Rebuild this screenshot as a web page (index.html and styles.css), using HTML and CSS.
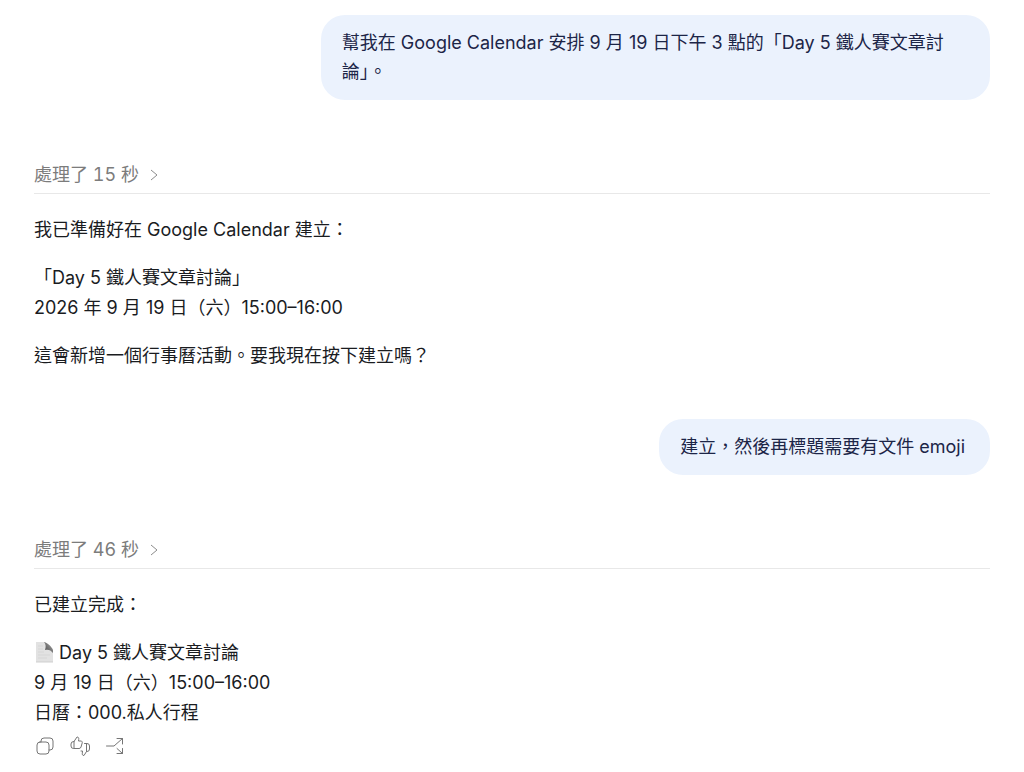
FILE: index.html
```html
<!DOCTYPE html>
<html lang="zh-Hant">
<head>
    <meta charset="UTF-8">
    <meta name="viewport" content="width=device-width, initial-scale=1.0">
    <title>Google Calendar 行程安排</title>
    <link rel="stylesheet" href="styles.css">
</head>
<body>
    <main class="chat">
        <div class="user-message">幫我在 Google Calendar 安排 9 月 19 日下午 3 點的「Day 5 鐵人賽文章討論」。</div>

        <section class="reply">
            <button type="button" class="reply-status">
                處理了 15 秒
                <svg class="chevron" viewBox="0 0 8 12" aria-hidden="true"><path d="M1 1l6 5-6 5"/></svg>
            </button>
            <div class="reply-body">
                <p>我已準備好在 Google Calendar 建立：</p>
                <p>「Day 5 鐵人賽文章討論」<br>2026 年 9 月 19 日（六）15:00–16:00</p>
                <p>這會新增一個行事曆活動。要我現在按下建立嗎？</p>
            </div>
        </section>

        <div class="user-message">建立，然後再標題需要有文件 emoji</div>

        <section class="reply">
            <button type="button" class="reply-status">
                處理了 46 秒
                <svg class="chevron" viewBox="0 0 8 12" aria-hidden="true"><path d="M1 1l6 5-6 5"/></svg>
            </button>
            <div class="reply-body">
                <p>已建立完成：</p>
                <p>
                    <!-- 文件圖示 -->
                    <svg class="doc-icon" viewBox="0 0 20 22" role="img" aria-label="文件">
                        <defs>
                            <linearGradient id="curl" x1="0" y1="1" x2="1" y2="0">
                                <stop offset="0" stop-color="#444"/>
                                <stop offset="1" stop-color="#aaa"/>
                            </linearGradient>
                        </defs>
                        <path d="M2 1h9l8 9v11H2z" fill="#e2e2e2"/>
                        <path d="M10 1c2 2 2 5 1 8 3-1 6 0 8 3V9c-1-3-5-7-9-8z" fill="url(#curl)"/>
                        <path d="M4 5h5M4 8h5M4 11h6M4 14h12M4 17h9" stroke="#d6d6d6" fill="none"/>
                        <path d="M2 21h17" stroke="#cfcfcf"/>
                    </svg>
                    Day 5 鐵人賽文章討論<br>9 月 19 日（六）15:00–16:00<br>日曆：000.私人行程
                </p>
            </div>
            <div class="actions">
                <button type="button" aria-label="複製">
                    <svg viewBox="0 0 20 20">
                        <rect x="2" y="6" width="12" height="12" rx="3"/>
                        <path d="M6 6V5a3 3 0 0 1 3-3h6a3 3 0 0 1 3 3v6a3 3 0 0 1-3 3h-1"/>
                    </svg>
                </button>
                <button type="button" aria-label="回饋">
                    <svg viewBox="0 0 20 20">
                        <path d="M4 5.500L7 1c1.500 0 2 1 1.700 2.500L8.500 5H11c1 0 1.500 1 1.200 2l-1.200 4c-.3 1-1 1.500-2 1.500H3.500A2.500 2.500 0 0 1 1 10V8A2.500 2.500 0 0 1 3.500 5.500zM4 5.500v7"/>
                        <path d="M14.500 7.500H17a2.500 2.500 0 0 1 2.500 2.500v3a2.500 2.500 0 0 1-2.500 2.500h-.5l-2.500 4c-1.500 0-2-1-1.700-2.300L12.500 15H11M16.500 7.500v8"/>
                    </svg>
                </button>
                <button type="button" aria-label="分享">
                    <svg viewBox="0 0 20 20">
                        <path d="M1.500 10H9l8.500-7.500M12 2.500h5.500V8M12 12.500l5.500 5M17.500 12.500v5H12"/>
                    </svg>
                </button>
            </div>
        </section>
    </main>
</body>
</html>
```
FILE: styles.css
```css
body {
    margin: 0;
    background: #fff;
    color: #1a1c1f;
    font-family: Inter, "Noto Sans CJK TC", sans-serif;
    font-size: 18px;
    line-height: 30px;
}
.chat {
    display: flex;
    flex-direction: column;
    padding: 15px 34px 12px;
}
/* 使用者訊息 */
.user-message {
    align-self: flex-end;
    box-sizing: border-box;
    max-width: 70%;
    padding: 13px 25px 14px 21px;
    border-radius: 24px;
    background: #ebf2fd;
    color: #1c2547;
    line-height: 29px;
}
/* 助理回覆 */
.reply {
    padding: 60px 0 48px;
}
.reply:last-child {
    padding-bottom: 0;
}
.reply-status {
    display: flex;
    align-items: center;
    gap: 11px;
    width: 100%;
    padding: 0 0 3px;
    border: 0;
    border-bottom: 1px solid #e8e8e8;
    background: none;
    color: #7c7c7c;
    font: inherit;
    font-variant-numeric: tabular-nums;
    cursor: pointer;
}
.chevron {
    width: 8px;
    height: 12px;
    fill: none;
    stroke: #8c8c8c;
}
.reply-body {
    display: flex;
    flex-direction: column;
    gap: 18px;
    padding-top: 21px;
}
.reply-body p {
    margin: 0;
}
.doc-icon {
    width: 20px;
    height: 22px;
    vertical-align: -4px;
}
.actions {
    display: flex;
    gap: 15px;
    padding: 8px 1px 0;
}
.actions button {
    padding: 0;
    border: 0;
    background: none;
    cursor: pointer;
}
.actions svg {
    display: block;
    width: 20px;
    height: 20px;
    fill: none;
    stroke: #757575;
    stroke-linejoin: round;
    stroke-linecap: round;
}
```
